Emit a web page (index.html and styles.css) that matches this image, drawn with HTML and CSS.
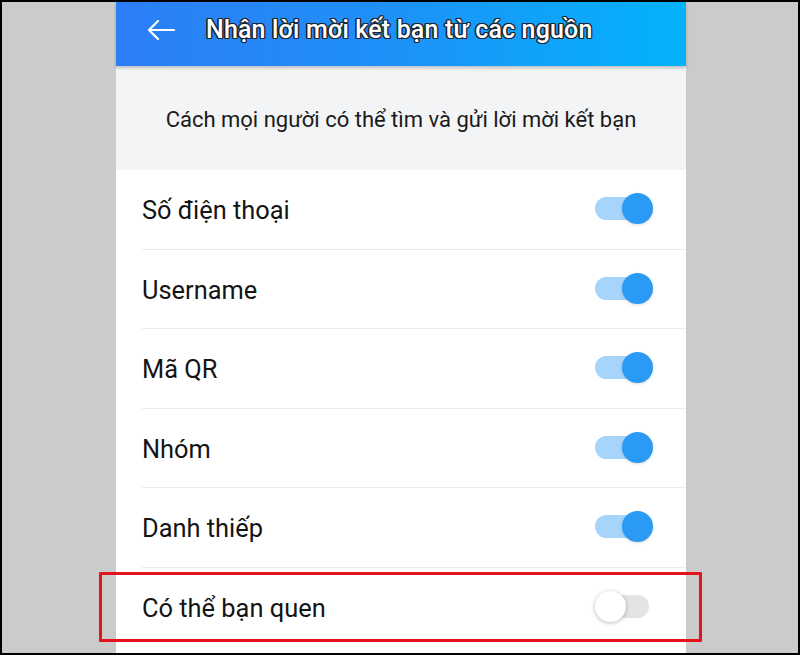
FILE: index.html
```html
<!DOCTYPE html>
<html lang="vi">
<head>
<meta charset="utf-8">
<title>Nhận lời mời kết bạn từ các nguồn</title>
<link rel="stylesheet" href="styles.css">
</head>
<body>
<div class="frame">
  <div class="phone">
    <header class="appbar">
      <svg class="back" width="28" height="20" viewBox="0 0 28 20" aria-hidden="true">
        <path d="M27 10H2M11 1L2 10l9 9" fill="none" stroke="#fff" stroke-width="2.2" stroke-linecap="round" stroke-linejoin="round"/>
      </svg>
      <h1 class="title">Nhận lời mời kết bạn từ các nguồn</h1>
    </header>
    <div class="intro">Cách mọi người có thể tìm và gửi lời mời kết bạn</div>
    <ul class="list">
      <li class="row"><span class="label">Số điện thoại</span><span class="toggle on"><span class="knob"></span></span></li>
      <li class="row"><span class="label">Username</span><span class="toggle on"><span class="knob"></span></span></li>
      <li class="row"><span class="label">Mã QR</span><span class="toggle on"><span class="knob"></span></span></li>
      <li class="row"><span class="label">Nhóm</span><span class="toggle on"><span class="knob"></span></span></li>
      <li class="row"><span class="label">Danh thiếp</span><span class="toggle on"><span class="knob"></span></span></li>
      <li class="row last"><span class="label">Có thể bạn quen</span><span class="toggle off"><span class="knob"></span></span></li>
    </ul>
  </div>
  <div class="highlight"></div>
</div>
</body>
</html>
```
FILE: styles.css
```css
* { box-sizing: border-box; }
html, body { margin: 0; padding: 0; }
body {
  width: 800px;
  height: 655px;
  overflow: hidden;
  font-family: Roboto, "Noto Sans", Arial, sans-serif;
}
.frame {
  position: relative;
  width: 800px;
  height: 655px;
  border: 2px solid #000;
  background: #cbcbcb;
  overflow: hidden;
}
.phone {
  margin-left: 114px;
  width: 570px;
  height: 100%;
  background: #fff;
}
.appbar {
  position: relative;
  z-index: 1;
  height: 64px;
  display: flex;
  align-items: center;
  padding-left: 31px;
  background: linear-gradient(90deg, #2c7ef6 0%, #1f8ff8 45%, #03b3fb 100%);
  box-shadow: 0 2px 3px rgba(0,0,0,0.22);
}
.back { flex: none; margin-top: -8px; }
.title {
  margin: 0 0 0 31px;
  margin-top: -9px;
  color: #fff;
  font-size: 25px;
  font-weight: 500;
  letter-spacing: 0.15px;
  white-space: nowrap;
  text-shadow:
    -1px -1px 0 #1b2431, 1px -1px 0 #1b2431, -1px 1px 0 #1b2431, 1px 1px 0 #1b2431,
    0 -1.4px 0 #1b2431, 0 1.4px 0 #1b2431, -1.4px 0 0 #1b2431, 1.4px 0 0 #1b2431;
}
.intro {
  height: 104px;
  background: #f3f4f6;
  display: flex;
  align-items: center;
  justify-content: center;
  padding-top: 2px;
  color: #1a1a1a;
  font-size: 22px;
}
.list { list-style: none; margin: 0; padding: 0; }
.row {
  margin-left: 26px;
  height: 79.5px;
  padding-right: 33px;
  display: flex;
  align-items: center;
  justify-content: space-between;
  border-bottom: 1px solid #ebebeb;
}
.row.last { border-bottom: none; }
.label {
  font-size: 25.4px;
  color: #141414;
  padding-top: 2px;
}
.toggle {
  position: relative;
  width: 58px;
  height: 32px;
  flex: none;
}
.toggle::before {
  content: "";
  position: absolute;
  top: 4px;
  height: 23px;
  border-radius: 12px;
}
.toggle.on::before { left: 0; right: 3px; background: #a7d4fb; }
.toggle.off::before { left: 3px; right: 4px; background: #e4e4e4; }
.knob {
  position: absolute;
  top: 0;
  width: 31px;
  height: 31px;
  border-radius: 50%;
}
.toggle.on .knob { right: 0; background: #2b9af4; box-shadow: 0 1px 3px rgba(0,0,0,0.15); }
.toggle.off .knob { left: 0; background: #fff; box-shadow: 0 1px 4px rgba(0,0,0,0.28); }
.highlight {
  position: absolute;
  left: 97px;
  top: 570px;
  width: 603px;
  height: 70px;
  border: 3px solid #e3141b;
  border-radius: 1px;
  pointer-events: none;
}
```
